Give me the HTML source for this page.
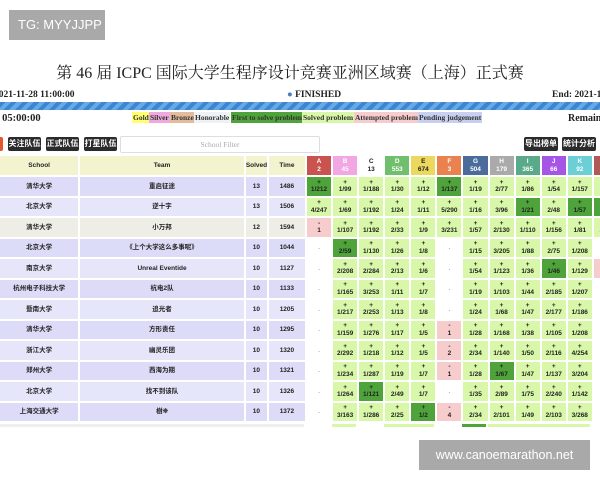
<!DOCTYPE html>
<html><head><meta charset="utf-8"><style>
*{margin:0;padding:0;box-sizing:border-box}
body{width:600px;height:480px;overflow:hidden;background:#fff;position:relative;font-family:"Liberation Sans","Noto Sans CJK SC",sans-serif}
.abs{position:absolute}
.tg{left:9px;top:10px;width:96px;height:30px;background:#a9a9a9;color:#fff;font-size:13px;line-height:30px;padding-left:9px}
.title{left:0;width:580px;top:60px;text-align:center;font-family:"Liberation Serif","Noto Serif CJK SC",serif;font-size:16px;color:#222}
.serif{font-family:"Liberation Serif","Noto Serif CJK SC",serif;font-weight:bold;color:#222}
.bar{left:0;top:102px;width:600px;height:8px;background:repeating-linear-gradient(135deg,#3b86d4 0 4px,#6aa8e4 4px 8px)}
.leg{top:112px;height:11px;font-size:7.5px;line-height:11px;font-family:"Liberation Serif",serif;font-weight:bold;padding:0 1px;color:#333}
.btn{top:137px;height:14px;background:#2b2b2b;color:#fff;font-size:8px;line-height:14px;text-align:center;border-radius:2px;font-weight:bold}
.filter{left:120px;top:136px;width:200px;height:17px;border:1px solid #ddd;border-radius:2px;color:#aaa;font-size:7.5px;line-height:15px;text-align:center;font-family:"Liberation Serif",serif}
table{position:absolute;left:-2px;top:154px;border-spacing:2px;font-size:6.5px;font-weight:bold;color:#222;table-layout:fixed;width:622px}
td{height:18.5px;text-align:center;padding:0;line-height:7.5px;vertical-align:middle;overflow:hidden;white-space:nowrap}
tr.h td{background:#f3f3cf;height:19px}
td.s{width:78px}td.t{width:163px}td.v{width:21px}td.m{width:36px}
td.p{width:24px;background:#d9f7a9}
td.d{background:#4ea43a}
td.a{background:#f6cccc}
td.e{background:#fff;color:#aaa}
tr.r td.s,tr.r td.t,tr.r td.v,tr.r td.m{background:#dcdcf8}
tr.r2 td.s,tr.r2 td.t,tr.r2 td.v,tr.r2 td.m{background:#e6e6fb}
tr.hn td.s,tr.hn td.t,tr.hn td.v,tr.hn td.m{background:#eeeee6}
tr.h td.p{color:#fff}
.wm{left:419px;top:440px;width:171px;height:30px;background:#a9a9a9;color:#fff;font-size:12.5px;line-height:30px;text-align:center}
</style></head><body>
<div class="abs tg">TG: MYYJJPP</div>
<div class="abs title">第 46 届 ICPC 国际大学生程序设计竞赛亚洲区域赛（上海）正式赛</div>
<div class="abs serif" style="left:-6px;top:90px;font-size:9.5px">2021-11-28 11:00:00</div>
<div class="abs serif" style="left:287px;top:90px;font-size:9.5px"><span style="color:#4a7fb8">●</span> FINISHED</div>
<div class="abs serif" style="left:552px;top:90px;font-size:9.5px;white-space:nowrap">End: 2021-11</div>
<div class="abs bar"></div>
<div class="abs serif" style="left:-4px;top:113px;font-size:10.5px">: 05:00:00</div>
<div class="abs serif" style="left:568px;top:113px;font-size:10px">Remain</div>
<div class="abs leg" style="left:132px;background:#ffff70">Gold</div>
<div class="abs leg" style="left:149px;background:#eeaadd">Silver</div>
<div class="abs leg" style="left:170px;background:#e2bc9c">Bronze</div>
<div class="abs leg" style="left:194px;background:#eef2f4">Honorable</div>
<div class="abs leg" style="left:231px;background:#4ea43a">First to solve problem</div>
<div class="abs leg" style="left:302px;background:#d9f7a9">Solved problem</div>
<div class="abs leg" style="left:354px;background:#f6cccc">Attempted problem</div>
<div class="abs leg" style="left:418px;background:#c8d0f2">Pending judgement</div>
<div class="abs btn" style="left:-2px;width:5px;background:#e8552a"></div>
<div class="abs btn" style="left:8px;width:33px">关注队伍</div>
<div class="abs btn" style="left:46px;width:33px">正式队伍</div>
<div class="abs btn" style="left:84px;width:33px">打星队伍</div>
<div class="abs filter">School Filter</div>
<div class="abs btn" style="left:524px;width:34px">导出榜单</div>
<div class="abs btn" style="left:562px;width:34px">统计分析</div>
<div class="abs btn" style="left:600px;width:10px"></div>
<table>
<tr class="h"><td class="s">School</td><td class="t">Team</td><td class="v">Solved</td><td class="m">Time</td>
<td class="p" style="background:#c9534e">A<br>2</td><td class="p" style="background:#f2a6e4">B<br>45</td><td class="p" style="background:#fff;color:#222">C<br>13</td><td class="p" style="background:#6fbf6c">D<br>553</td><td class="p" style="background:#ecd85c;color:#222">E<br>674</td><td class="p" style="background:#ea8250">F<br>3</td><td class="p" style="background:#4b6b9b">G<br>504</td><td class="p" style="background:#aaa">H<br>179</td><td class="p" style="background:#5aa98a">I<br>365</td><td class="p" style="background:#a556e6">J<br>66</td><td class="p" style="background:#6ccfd6">K<br>92</td><td class="p" style="background:#b05a58">L<br>3</td></tr>
<tr class="r"><td class="s">清华大学</td><td class="t">重启征途</td><td class="v">13</td><td class="m">1486</td><td class="p d">+<br>1/212</td><td class="p">+<br>1/99</td><td class="p">+<br>1/188</td><td class="p">+<br>1/30</td><td class="p">+<br>1/12</td><td class="p d">+<br>1/137</td><td class="p">+<br>1/19</td><td class="p">+<br>2/77</td><td class="p">+<br>1/86</td><td class="p">+<br>1/54</td><td class="p">+<br>1/157</td><td class="p">+<br>1/29</td></tr>
<tr class="r2"><td class="s">北京大学</td><td class="t">逆十字</td><td class="v">13</td><td class="m">1506</td><td class="p">+<br>4/247</td><td class="p">+<br>1/69</td><td class="p">+<br>1/192</td><td class="p">+<br>1/24</td><td class="p">+<br>1/11</td><td class="p">+<br>5/290</td><td class="p">+<br>1/16</td><td class="p">+<br>3/96</td><td class="p d">+<br>1/21</td><td class="p">+<br>2/48</td><td class="p d">+<br>1/57</td><td class="p d">+<br>1/15</td></tr>
<tr class="hn"><td class="s">清华大学</td><td class="t">小万邦</td><td class="v">12</td><td class="m">1594</td><td class="p a">-<br>1</td><td class="p">+<br>1/107</td><td class="p">+<br>1/192</td><td class="p">+<br>2/33</td><td class="p">+<br>1/9</td><td class="p">+<br>3/231</td><td class="p">+<br>1/57</td><td class="p">+<br>2/130</td><td class="p">+<br>1/110</td><td class="p">+<br>1/156</td><td class="p">+<br>1/81</td><td class="p">+<br>2/26</td></tr>
<tr class="r"><td class="s">北京大学</td><td class="t">《上个大学这么多事呢》</td><td class="v">10</td><td class="m">1044</td><td class="p e">.</td><td class="p d">+<br>2/59</td><td class="p">+<br>1/130</td><td class="p">+<br>1/26</td><td class="p">+<br>1/8</td><td class="p e">.</td><td class="p">+<br>1/15</td><td class="p">+<br>3/205</td><td class="p">+<br>1/88</td><td class="p">+<br>2/75</td><td class="p">+<br>1/208</td><td class="p e">.</td></tr>
<tr class="r2"><td class="s">南京大学</td><td class="t">Unreal Eventide</td><td class="v">10</td><td class="m">1127</td><td class="p e">.</td><td class="p">+<br>2/208</td><td class="p">+<br>2/284</td><td class="p">+<br>2/13</td><td class="p">+<br>1/6</td><td class="p e">.</td><td class="p">+<br>1/54</td><td class="p">+<br>1/123</td><td class="p">+<br>1/36</td><td class="p d">+<br>1/46</td><td class="p">+<br>1/129</td><td class="p a">-<br>1</td></tr>
<tr class="r"><td class="s">杭州电子科技大学</td><td class="t">杭电2队</td><td class="v">10</td><td class="m">1133</td><td class="p e">.</td><td class="p">+<br>1/165</td><td class="p">+<br>3/253</td><td class="p">+<br>1/11</td><td class="p">+<br>1/7</td><td class="p e">.</td><td class="p">+<br>1/19</td><td class="p">+<br>1/103</td><td class="p">+<br>1/44</td><td class="p">+<br>2/185</td><td class="p">+<br>1/207</td><td class="p e">.</td></tr>
<tr class="r2"><td class="s">暨南大学</td><td class="t">追光者</td><td class="v">10</td><td class="m">1205</td><td class="p e">.</td><td class="p">+<br>1/217</td><td class="p">+<br>2/253</td><td class="p">+<br>1/13</td><td class="p">+<br>1/8</td><td class="p e">.</td><td class="p">+<br>1/24</td><td class="p">+<br>1/68</td><td class="p">+<br>1/47</td><td class="p">+<br>2/177</td><td class="p">+<br>1/186</td><td class="p e">.</td></tr>
<tr class="r"><td class="s">清华大学</td><td class="t">方形责任</td><td class="v">10</td><td class="m">1295</td><td class="p e">.</td><td class="p">+<br>1/159</td><td class="p">+<br>1/276</td><td class="p">+<br>1/17</td><td class="p">+<br>1/5</td><td class="p a">-<br>1</td><td class="p">+<br>1/28</td><td class="p">+<br>1/168</td><td class="p">+<br>1/38</td><td class="p">+<br>1/105</td><td class="p">+<br>1/208</td><td class="p e">.</td></tr>
<tr class="r2"><td class="s">浙江大学</td><td class="t">幽灵乐团</td><td class="v">10</td><td class="m">1320</td><td class="p e">.</td><td class="p">+<br>2/292</td><td class="p">+<br>1/218</td><td class="p">+<br>1/12</td><td class="p">+<br>1/5</td><td class="p a">-<br>2</td><td class="p">+<br>2/34</td><td class="p">+<br>1/140</td><td class="p">+<br>1/50</td><td class="p">+<br>2/116</td><td class="p">+<br>4/254</td><td class="p e">.</td></tr>
<tr class="r"><td class="s">郑州大学</td><td class="t">西海为期</td><td class="v">10</td><td class="m">1321</td><td class="p e">.</td><td class="p">+<br>1/234</td><td class="p">+<br>1/287</td><td class="p">+<br>1/19</td><td class="p">+<br>1/7</td><td class="p a">-<br>1</td><td class="p">+<br>1/28</td><td class="p d">+<br>1/67</td><td class="p">+<br>1/47</td><td class="p">+<br>1/137</td><td class="p">+<br>3/204</td><td class="p e">.</td></tr>
<tr class="r2"><td class="s">北京大学</td><td class="t">找不到该队</td><td class="v">10</td><td class="m">1326</td><td class="p e">.</td><td class="p">+<br>1/264</td><td class="p d">+<br>1/121</td><td class="p">+<br>2/49</td><td class="p">+<br>1/7</td><td class="p e">.</td><td class="p">+<br>1/35</td><td class="p">+<br>2/89</td><td class="p">+<br>1/75</td><td class="p">+<br>2/240</td><td class="p">+<br>1/142</td><td class="p e">.</td></tr>
<tr class="r"><td class="s">上海交通大学</td><td class="t">樹❊</td><td class="v">10</td><td class="m">1372</td><td class="p e">.</td><td class="p">+<br>3/163</td><td class="p">+<br>1/286</td><td class="p">+<br>2/25</td><td class="p d">+<br>1/2</td><td class="p a">-<br>4</td><td class="p">+<br>2/34</td><td class="p">+<br>2/101</td><td class="p">+<br>1/49</td><td class="p">+<br>2/103</td><td class="p">+<br>3/268</td><td class="p e">.</td></tr>
</table>
<div class="abs" style="left:0;top:424px;width:304px;height:3px;background:#eeeef0"></div>
<div class="abs" style="left:332px;top:424px;width:24px;height:3px;background:#d9f7a9"></div>
<div class="abs" style="left:384px;top:424px;width:50px;height:3px;background:#d9f7a9"></div>
<div class="abs" style="left:462px;top:424px;width:24px;height:3px;background:#4ea43a"></div>
<div class="abs" style="left:488px;top:424px;width:102px;height:3px;background:#d9f7a9"></div>
<div class="abs wm">www.canoemarathon.net</div>
</body></html>
